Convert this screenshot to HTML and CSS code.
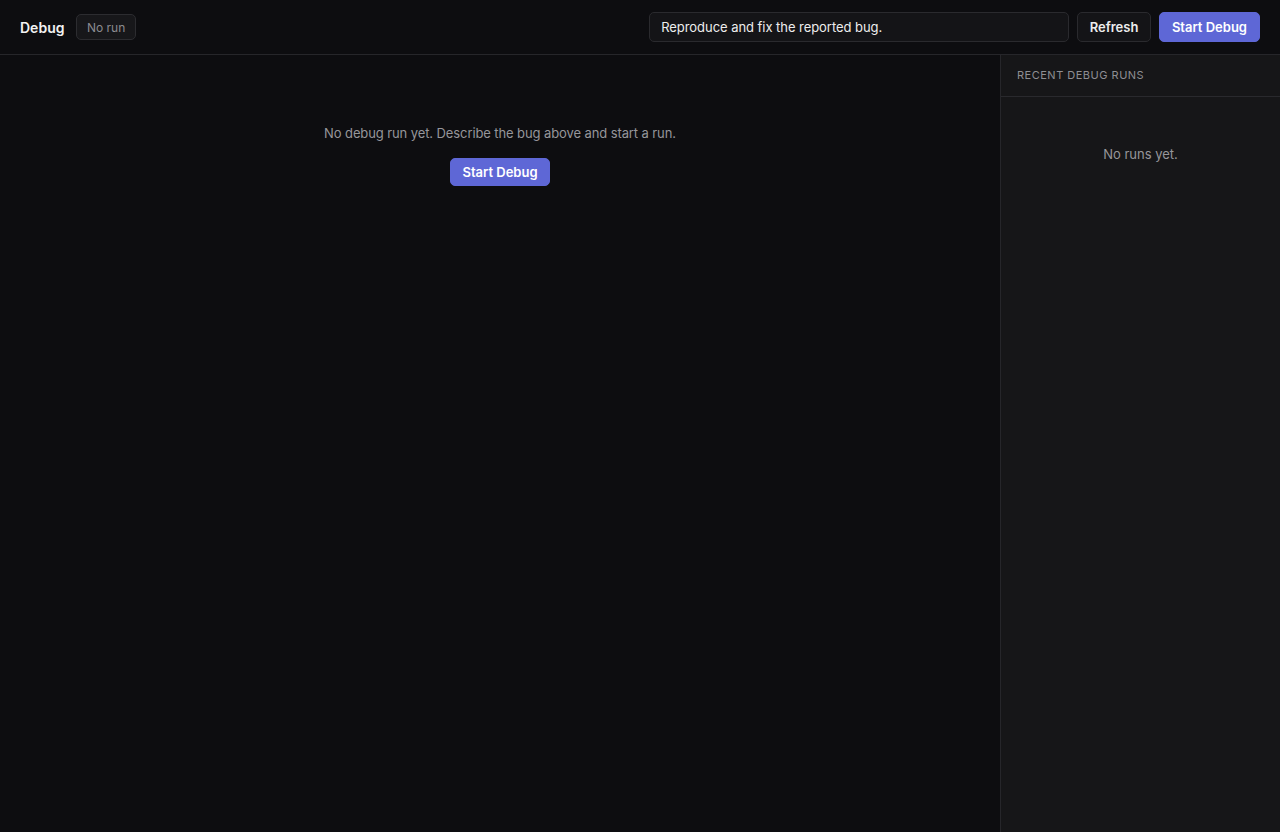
FILE: index.html
```html
<!DOCTYPE html>
<html lang="en">
<head>
<meta charset="utf-8">
<title>Debug</title>
<link rel="stylesheet" href="styles.css">
</head>
<body>
<div class="app">
  <header class="topbar">
    <div class="left">
      <span class="title">Debug</span>
      <span class="badge">No run</span>
    </div>
    <div class="right">
      <input class="prompt" type="text" value="Reproduce and fix the reported bug.">
      <button class="btn secondary">Refresh</button>
      <button class="btn primary">Start Debug</button>
    </div>
  </header>
  <div class="body">
    <main class="main">
      <div class="empty">
        <p class="empty-text">No debug run yet. Describe the bug above and start a run.</p>
        <button class="btn primary small">Start Debug</button>
      </div>
    </main>
    <aside class="sidebar">
      <div class="side-head">Recent Debug Runs</div>
      <div class="side-empty">No runs yet.</div>
    </aside>
  </div>
</div>
</body>
</html>
```
FILE: styles.css
```css
* { box-sizing: border-box; }
html, body { margin: 0; height: 100%; }
body {
  background: #0d0d10;
  color: #ededed;
  font-family: Inter, "Noto Sans", sans-serif;
  font-size: 13px;
}
.app { display: flex; flex-direction: column; height: 100vh; }
.topbar {
  height: 55px;
  flex: none;
  display: flex;
  align-items: center;
  justify-content: space-between;
  padding: 0 20px;
  border-bottom: 1px solid #26262a;
}
.left { display: flex; align-items: center; gap: 12px; }
.title { font-weight: 600; font-size: 14px; color: #f2f2f2; }
.badge {
  height: 26px;
  padding: 0 9.5px;
  display: inline-flex;
  align-items: center;
  border: 1px solid #2c2c30;
  background: #17171a;
  border-radius: 5px;
  font-size: 12px;
  color: #8b8b90;
}
.right { display: flex; align-items: center; gap: 8px; }
.prompt {
  width: 420px;
  height: 30px;
  padding: 0 11px;
  background: #141417;
  border: 1px solid #2a2a2e;
  border-radius: 5px;
  color: #ededed;
  font-family: inherit;
  font-size: 13px;
  letter-spacing: -0.05px;
  outline: none;
}
.btn {
  height: 30px;
  padding: 0 12px;
  border-radius: 5px;
  font-family: inherit;
  font-size: 13px;
  font-weight: 600;
  cursor: pointer;
}
.btn.secondary {
  padding: 0 11.5px;
  background: #141417;
  border: 1px solid #2a2a2e;
  color: #ededed;
}
.btn.primary {
  background: #5e67d6;
  border: 1px solid #5e67d6;
  color: #ffffff;
}
.btn.small { height: 28px; padding: 0 11.5px; }
.body { flex: 1; display: flex; min-height: 0; }
.main { flex: 1; }
.empty {
  display: flex;
  flex-direction: column;
  align-items: center;
  padding-top: 69px;
}
.empty-text {
  margin: 0 0 16px;
  color: #96969b;
  font-size: 13px;
  line-height: 18px;
  letter-spacing: -0.1px;
}
.sidebar {
  width: 280px;
  flex: none;
  background: #161618;
  border-left: 1px solid #26262a;
}
.side-head {
  height: 42px;
  display: flex;
  align-items: center;
  padding: 0 16px 2px;
  border-bottom: 1px solid #29292d;
  font-size: 11px;
  letter-spacing: 0.5px;
  text-transform: uppercase;
  color: #8e8e93;
}
.side-empty {
  text-align: center;
  padding-top: 49px;
  color: #96969b;
  font-size: 13px;
}
```
